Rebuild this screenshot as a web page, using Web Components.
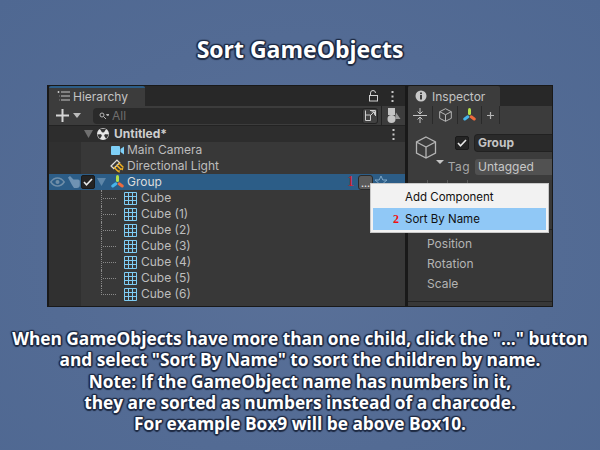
<!doctype html>
<html><head><meta charset="utf-8">
<style>html,body{margin:0;padding:0;background:#546c96}</style></head>
<body>
<x-slide>
  <x-title slot="title">Sort GameObjects</x-title>
  <x-window slot="window"></x-window>
  <x-title slot="caption" small>When GameObjects have more than one child, click the "..." button<br>and select "Sort By Name" to sort the children by name.<br>Note: If the GameObject name has numbers in it,<br>they are sorted as numbers instead of a charcode.<br>For example Box9 will be above Box10.</x-title>
</x-slide>
<script>
const ICONS={
 list:'<svg width="14" height="12" viewBox="0 0 14 12" fill="none" stroke="#c4c4c4"><path d="M1.500 1v2M.5 2h2M4 2h9M4 6h9M4 10h9M3 6h-.5M3 10h-.5"/></svg>',
 plus:'<svg width="13" height="13" viewBox="0 0 13 13" fill="none" stroke="#d6d6d6" stroke-width="2"><path d="M6.500 0v13M0 6.500h13"/></svg>',
 drop:'<svg width="8" height="5" viewBox="0 0 8 5"><path d="M0 0h8L4 5z" fill="#bcbcbc"/></svg>',
 tri:'<svg width="9" height="8" viewBox="0 0 9 8"><path d="M0 0h9L4.500 8z" fill="#6f6f6f"/></svg>',
 triBlue:'<svg width="9" height="8" viewBox="0 0 9 8"><path d="M0 0h9L4.500 8z" fill="#5e86a8"/></svg>',
 search:'<svg width="10" height="8" viewBox="0 0 10 8" fill="none" stroke="#b5b5b5"><circle cx="3" cy="3" r="2"/><path d="M4.500 4.500L7 7M7.500 2.500h2.500L8.700 4z"/></svg>',
 unity:'<svg width="12" height="12" viewBox="0 0 13 13"><circle cx="6.500" cy="6.500" r="6.500" fill="#e6e6e6"/><path d="M6.500 6.500L3 .8h7zM6.500 6.500L.2 7l2.800 5zM6.500 6.500l6.300.5-2.800 5z" fill="#333"/><circle cx="6.500" cy="6.500" r="2" fill="#e6e6e6"/></svg>',
 camera:'<svg width="13" height="11" viewBox="0 0 13 11"><rect x="0" y="1" width="9" height="9" rx="1" fill="#7fd0f7"/><path d="M9.500 4L13 1.500v8L9.500 7z" fill="#7fd0f7"/></svg>',
 light:'<svg width="15" height="15" viewBox="0 0 14 14" fill="none"><path d="M1 6.500L6.500 1 9 3.500 3.500 9z" stroke="#dcdcdc" stroke-width="1.200"/><path d="M3.500 7.500L7.500 11.500M6 5.500L10.500 10M8 3.500L12.500 8" stroke="#efb021" stroke-width="1.400"/><path d="M6.500 11l2.200 2 .6-2.600zM9.500 9l2.400 1.800.6-2.600z" fill="#efb021"/></svg>',
 group:'<svg width="13" height="14" viewBox="0 0 13 14" fill="none" stroke-width="3" stroke-linecap="round"><path d="M6.500 1.500v4" stroke="#b4e04a"/><path d="M4.800 8.800L1.800 11" stroke="#46b4ea"/><path d="M8.200 8.800l3 2.200" stroke="#ee6a3c"/></svg>',
 cube:'<svg width="13" height="13" viewBox="0 0 13 13" fill="none" stroke="#7fcdf5"><path d="M.5.5h12v12H.5zM4.500.5v12M8.500.5v12M.5 4.500h12M.5 8.500h12"/></svg>',
 lock:'<svg width="11" height="12" viewBox="0 0 11 12" fill="none" stroke="#cfcfcf"><rect x="1.500" y="5.500" width="8" height="5.500"/><path d="M2.500 5V3a2.500 2.500 0 0 1 5 0"/></svg>',
 kebab:'<svg width="3" height="11" viewBox="0 0 3 11" fill="#c8c8c8"><rect x=".5" width="2" height="2"/><rect x=".5" y="4.500" width="2" height="2"/><rect x=".5" y="9" width="2" height="2"/></svg>',
 scope:'<svg width="11" height="11" viewBox="0 0 11 11" fill="none" stroke="#cfcfcf"><path d="M.5 5V.5M5 .5h5.500V6M.5 5h5v5.500H.5z"/><path d="M5 6l4-4M6.500 1.800h3v3"/></svg>',
 shapes:'<svg width="14" height="15" viewBox="0 0 14 15"><rect x="1" y="0" width="7" height="7" fill="#c4c4c4"/><circle cx="4.500" cy="11" r="4" fill="#c4c4c4"/><path d="M9 4.500l4.500 6.500H8z" fill="#9a9a9a"/></svg>',
 eye:'<svg width="15" height="10" viewBox="0 0 15 10" fill="none" stroke="#6f8ea8" stroke-width="1.400"><path d="M.8 5C3 1.800 5 1 7.500 1S12 1.800 14.200 5C12 8.200 10 9 7.500 9S3 8.200.8 5z"/><circle cx="7.500" cy="5" r="2" fill="#6f8ea8" stroke="none"/></svg>',
 hand:'<svg width="12" height="12" viewBox="0 0 12 12"><path d="M0 1.500L2 0l3.500 3.500H10a1.800 1.800 0 0 1 1.800 1.800V9a3 3 0 0 1-3 3H6L4 9z" fill="#6f93b3"/></svg>',
 check:'<svg width="10" height="8" viewBox="0 0 10 8" fill="none" stroke="#e8e8e8" stroke-width="1.600"><path d="M1 4l2.500 2.800L9 1"/></svg>',
 star:'<svg width="14" height="14" viewBox="0 0 14 14" fill="none" stroke="#7fa8c8"><path d="M7 1l1.800 4h4.200l-3.300 2.700L11 12.500 7 10l-4 2.500 1.300-4.800L1 5h4.200z"/></svg>',
 info:'<svg width="12" height="12" viewBox="0 0 12 12"><circle cx="6" cy="6" r="5.500" fill="#c8c8c8"/><rect x="5" y="5" width="2" height="4.500" fill="#3c3c3c"/><rect x="5" y="2.500" width="2" height="1.600" fill="#3c3c3c"/></svg>',
 align:'<svg width="14" height="15" viewBox="0 0 14 15" fill="none" stroke="#c4c4c4"><path d="M0 7.500h14M7 0v5.500M7 9.500V15"/><path d="M4.500 3.500L7 6l2.500-2.500M4.500 11.500L7 9l2.500 2.500"/></svg>',
 box:'<svg width="13" height="14" viewBox="0 0 13 14" fill="none" stroke="#b5b5b5"><path d="M6.500.7l5.800 3v6.600l-5.800 3-5.800-3V3.700zM.7 3.700l5.800 3 5.800-3M6.500 6.700v6.600"/></svg>',
 boxL:'<svg width="22" height="23" viewBox="0 0 22 23" fill="none" stroke="#b5b5b5" stroke-width="1.300"><path d="M11 1l9.500 5v11L11 22l-9.500-5V6zM1.500 6L11 11l9.500-5M11 11v11"/></svg>',
 tplus:'<svg width="7" height="7" viewBox="0 0 7 7" fill="none" stroke="#b5b5b5" stroke-width="1.200"><path d="M3.500 0v7M0 3.500h7"/></svg>'
};
function def(name,css,html,extra){
  customElements.define(name,class extends HTMLElement{
    constructor(){super();const r=this.attachShadow({mode:'open'});
      r.innerHTML='<style>'+css+'</style>'+html;}
    connectedCallback(){if(extra)extra(this)}
  });
}
def('x-icon',':host{display:inline-flex;align-items:center;justify-content:center;flex:none;line-height:0}','',h=>{h.shadowRoot.innerHTML+=ICONS[h.getAttribute('name')]||''});

def('x-slide',`:host{display:flex;flex-direction:column;align-items:center;width:600px;height:450px;overflow:hidden;
  background:radial-gradient(ellipse at 50% 55%,#5a7199 0%,#536b94 60%,#4f6892 100%);font-family:"Open Sans","Noto Sans",sans-serif}
  .t{height:85px;display:flex;align-items:flex-end;box-sizing:border-box;padding-bottom:22px}
  .w{width:506px;height:222px}
  .c{margin-top:21px}`,
  `<div class="t"><slot name="title"></slot></div><div class="w"><slot name="window"></slot></div><div class="c"><slot name="caption"></slot></div>`);

def('x-title',`:host{display:block;color:#fff;font-weight:700;text-align:center;font-size:23px;line-height:28px;
  text-shadow:-1px -1px 1px #1f2b44,1px -1px 1px #1f2b44,-1px 1px 1px #1f2b44,1px 1px 1px #1f2b44,0 -1.500px 1px #1f2b44,0 1.500px 1px #1f2b44,-1.500px 0 1px #1f2b44,1.500px 0 1px #1f2b44}
  :host([small]){font-size:17.3px;line-height:21.300px;white-space:nowrap}`,'<slot></slot>');

def('x-row',`:host{display:flex;align-items:center;height:16px;position:relative;color:#bdbdbd;font:12px/16px Inter,"Liberation Sans",sans-serif;white-space:nowrap}
  .gut{width:32px;height:100%;flex:none;background:#303030;display:flex;align-items:center;gap:3px;padding-left:1px;box-sizing:border-box}
  .body{flex:1;display:flex;align-items:center;height:100%;min-width:0}
  :host([selected]) .gut,:host([selected]) .body{background:#2c5d87;color:#dcdcdc}
  :host([head]) .gut,:host([head]) .body{background:#2d2d2d}
  :host([head]){font-weight:700;color:#cfcfcf}`,
  `<div class="gut"><slot name="gut"></slot></div><div class="body"><slot></slot></div>`);

def('x-guide',`:host{display:block;flex:none;width:23px;height:16px;box-sizing:border-box;margin-left:20px;position:relative;border-left:1px dotted #8a8a8a}
  :host::after{content:"";position:absolute;left:1px;top:8px;width:13px;border-top:1px dotted #8a8a8a}
  :host([last]){height:9px;align-self:flex-start}`,'');

def('x-tab',`:host{display:flex;align-items:center;box-sizing:border-box;height:20px;background:#3c3c3c;color:#c4c4c4;font:12px Inter,"Liberation Sans",sans-serif;border-radius:2px 2px 0 0}
  :host([active]){border-top:2px solid #2c5d87;padding-bottom:2px}`,'<slot></slot>');

def('x-hierarchy',`:host{display:flex;flex-direction:column;width:357px;height:100%;box-sizing:border-box;padding-left:1px;background:#191919;position:relative;flex:none}
 .strip{height:20px;display:flex;align-items:flex-start;background:#282828;flex:none}
 .strip x-tab{width:96px;padding-left:8px;gap:2px}
 .end{margin-left:auto;display:flex;align-items:center;height:20px;gap:12px;padding-right:11px}
 .tools{height:20px;background:#3c3c3c;display:flex;align-items:center;flex:none;padding-left:7px;border-bottom:1px solid #232323;box-sizing:border-box}
 .search{width:285px;height:16px;margin-left:12px;background:#2a2a2a;border-radius:4px;display:flex;align-items:center;padding-left:6px;box-sizing:border-box;color:#6e6e6e;font:12px Inter,"Liberation Sans",sans-serif;gap:3px}
 .btn{margin-left:auto;width:16px;height:16px;border:1px solid #222;background:#414141;border-radius:3px;box-sizing:border-box;display:flex;align-items:center;justify-content:center}
 .sep{width:1px;height:20px;background:#232323;margin-left:3px}
 .rows{display:flex;flex-direction:column;flex:1;background:linear-gradient(90deg,#303030 32px,#383838 32px)}
 .rk{margin-left:auto;margin-right:10px}
 .one{color:#e8141c;font:400 14px "Liberation Serif",serif;margin-left:auto;margin-right:4px}
 .more{width:15px;height:15px;background:#5a5a5a;border:1px solid #2a2a2a;border-radius:3px;box-sizing:border-box;color:#e8e8e8;font:700 9px/16px Inter,sans-serif;text-align:center;margin-right:1px}
 .star{margin-right:17px}`,
`<div class="strip"><x-tab active><x-icon name="list"></x-icon>Hierarchy</x-tab><div class="end"><x-icon name="lock"></x-icon><x-icon name="kebab"></x-icon></div></div>
 <div class="tools"><x-icon name="plus"></x-icon><x-icon name="drop" style="margin-left:4px"></x-icon>
  <div class="search"><x-icon name="search"></x-icon>All<div class="btn"><x-icon name="scope"></x-icon></div></div>
  <div class="sep"></div><x-icon name="shapes" style="margin-left:5px"></x-icon></div>
 <div class="rows">
  <x-row head><x-icon style="margin-left:3px" name="tri"></x-icon><x-icon style="margin-left:4px" name="unity"></x-icon><span style="margin-left:5px">Untitled*</span><x-icon class="rk" name="kebab"></x-icon></x-row>
  <x-row><x-icon style="margin-left:30px" name="camera"></x-icon><span style="margin-left:3px">Main Camera</span></x-row>
  <x-row><x-icon style="margin-left:29px" name="light"></x-icon><span style="margin-left:2px">Directional Light</span></x-row>
  <x-row selected><x-icon slot="gut" name="eye"></x-icon><x-icon slot="gut" name="hand"></x-icon>
    <x-check></x-check><x-icon style="margin-left:2px" name="triBlue"></x-icon><x-icon style="margin-left:5px" name="group"></x-icon><span style="margin-left:3px">Group</span>
    <span class="one">1</span><div class="more">...</div><x-icon class="star" name="star"></x-icon></x-row>
  <x-row><x-guide></x-guide><x-icon name="cube"></x-icon><span style="margin-left:4px">Cube</span></x-row>
  <x-row><x-guide></x-guide><x-icon name="cube"></x-icon><span style="margin-left:4px">Cube (1)</span></x-row>
  <x-row><x-guide></x-guide><x-icon name="cube"></x-icon><span style="margin-left:4px">Cube (2)</span></x-row>
  <x-row><x-guide></x-guide><x-icon name="cube"></x-icon><span style="margin-left:4px">Cube (3)</span></x-row>
  <x-row><x-guide></x-guide><x-icon name="cube"></x-icon><span style="margin-left:4px">Cube (4)</span></x-row>
  <x-row><x-guide></x-guide><x-icon name="cube"></x-icon><span style="margin-left:4px">Cube (5)</span></x-row>
  <x-row><x-guide last></x-guide><x-icon name="cube"></x-icon><span style="margin-left:4px">Cube (6)</span></x-row>
 </div>`);

def('x-check',`:host{display:flex;width:14px;height:14px;background:#242424;border:1px solid #1a1a1a;border-radius:2px;box-sizing:border-box;align-items:center;justify-content:center;flex:none}`,
 '<x-icon name="check"></x-icon>');

def('x-inspector',`:host{display:flex;flex-direction:column;flex:1;background:#383838;min-width:0;overflow:hidden;color:#b8b8b8;font:12px Inter,"Liberation Sans",sans-serif}
 .strip{height:20px;background:#282828;display:flex;flex:none}
 .strip x-tab{width:92px;padding-left:7px;gap:5px}
 .tb{height:18px;background:#3c3c3c;display:flex;align-items:center;flex:none}
 .cell{height:100%;display:flex;align-items:center;justify-content:center;border-right:1px solid #2a2a2a;box-sizing:border-box;flex:none}
 .head{background:#3c3c3c;flex:none;display:grid;grid-template-columns:47px 20px 1fr;grid-template-rows:16px 16px;row-gap:8px;padding:11px 0 5px;position:relative}
 .obj{grid-row:1/3;grid-column:1;position:relative}
 .obj x-icon{position:absolute;left:7px;top:1px}
 .dr{position:absolute;left:28px;top:25px;width:0;height:0;border:4px solid transparent;border-top:4px solid #c4c4c4;border-bottom:0}
 .chk{grid-row:1;grid-column:2;align-self:center}
 .name{grid-row:1;grid-column:3;background:#2a2a2a;box-shadow:0 0 0 1px #212121;border-radius:3px 0 0 3px;color:#c4c4c4;font-weight:700;padding-left:3px;line-height:16px;white-space:nowrap}
 .taglbl{grid-row:2;grid-column:1/3;text-align:right;padding-right:5px;line-height:16px;color:#a8a8a8;letter-spacing:.4px}
 .tag{grid-row:2;grid-column:3;background:#515151;border-radius:3px 0 0 3px;line-height:16px;padding-left:3px;color:#c8c8c8;white-space:nowrap}
 .ticks{height:10px;flex:none;display:flex;padding-left:19px;gap:19px}
 .ticks i{display:block;width:1px;height:4px;background:#5a5a5a}
 .sec{height:40px;box-sizing:border-box;flex:none;border-bottom:1px solid #232323}
 .t{display:flex;flex-direction:column;padding-left:19px;gap:4px;line-height:16px;color:#b4b4b4;margin-top:6px}
 .bot{flex:1;border-top:1px solid #232323;margin-top:9px}`,
`<div class="strip"><x-tab><x-icon name="info"></x-icon>Inspector</x-tab></div>
 <div class="tb"><div class="cell" style="width:25px"><x-icon name="align"></x-icon></div><div class="cell" style="width:25px"><x-icon name="box"></x-icon></div><div class="cell" style="width:24px"><x-icon name="group"></x-icon></div><div class="cell" style="width:18px"><x-icon name="tplus"></x-icon></div></div>
 <div class="head"><div class="obj"><x-icon name="boxL"></x-icon><div class="dr"></div></div><x-check class="chk"></x-check><div class="name">Group</div>
  <div class="taglbl">Tag</div><div class="tag">Untagged</div></div>
 <div class="ticks"><i></i><i></i><i></i></div>
 <div class="sec"></div>
 <div class="t"><span>Position</span><span>Rotation</span><span>Scale</span></div>
 <div class="bot"></div>`);

def('x-popup',`:host{position:absolute;left:322px;top:97px;width:179px;height:50px;box-sizing:border-box;background:#f2f2f2;border:1px solid #c8c8c8;padding:2px;display:flex;flex-direction:column;color:#101010;font:11.5px/22px Inter,"Liberation Sans",sans-serif;z-index:3}
 .i{height:22px;padding-left:32px;position:relative;white-space:nowrap}
 .s{background:#90c8f6}
 .n{position:absolute;left:20px;top:0;color:#f01010;font:700 12px/22px "Liberation Serif",serif}`,
 `<div class="i">Add Component</div><div class="i s"><span class="n">2</span>Sort By Name</div>`);

def('x-window',`:host{display:flex;width:506px;height:222px;box-sizing:border-box;background:#191919;border:1px solid #191919;position:relative;gap:3px;overflow:hidden}`,
 `<x-hierarchy></x-hierarchy><x-inspector></x-inspector><x-popup></x-popup>`);
</script>
</body></html>
